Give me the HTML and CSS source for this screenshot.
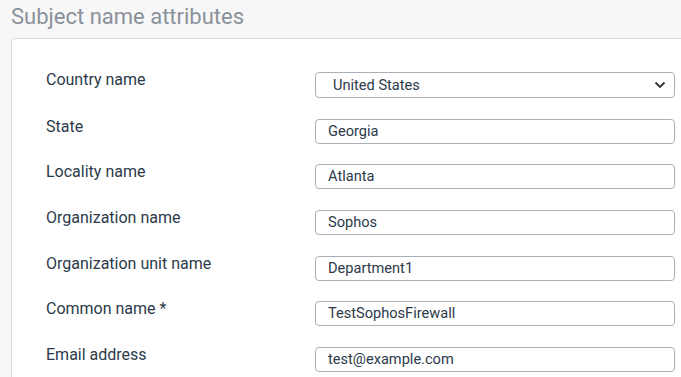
FILE: index.html
```html
<!DOCTYPE html>
<html>
<head>
<meta charset="utf-8">
<link rel="stylesheet" href="styles.css">
</head>
<body>
<div class="page">
  <h2 class="title">Subject name attributes</h2>
  <div class="card">
    <div class="form">
      <label class="label">Country name</label>
      <div class="select">
        <span>United States</span>
        <svg class="chev" width="12" height="8" viewBox="0 0 12 8"><path d="M1.5 1.5 L6 6 L10.5 1.5" fill="none" stroke="#333" stroke-width="1.8"/></svg>
      </div>
      <label class="label">State</label>
      <div class="input">Georgia</div>
      <label class="label">Locality name</label>
      <div class="input">Atlanta</div>
      <label class="label">Organization name</label>
      <div class="input">Sophos</div>
      <label class="label">Organization unit name</label>
      <div class="input">Department1</div>
      <label class="label">Common name *</label>
      <div class="input">TestSophosFirewall</div>
      <label class="label">Email address</label>
      <div class="input">test@example.com</div>
    </div>
  </div>
</div>
</body>
</html>
```
FILE: styles.css
```css
html, body {
  margin: 0;
  padding: 0;
  background: #f7f7f7;
  font-family: Roboto, "Liberation Sans", sans-serif;
  overflow: hidden;
}
.page {
  padding: 0 0 0 11px;
}
.title {
  margin: 0;
  padding-top: 3px;
  height: 35px;
  font-size: 22px;
  font-weight: 400;
  color: #8a919b;
  line-height: 28px;
}
.card {
  background: #fff;
  border: 1px solid #dcdcdc;
  border-right: none;
  border-radius: 4px 0 0 0;
  height: 400px;
  padding: 33px 0 0 34px;
}
.form {
  display: grid;
  grid-template-columns: 269px 360px;
  row-gap: 20.7px;
  align-items: start;
}
.label {
  font-size: 16px;
  color: #2c3a4a;
  line-height: 18px;
  margin-top: -1px;
}
.select, .input {
  box-sizing: border-box;
  border: 1px solid #a9afb7;
  border-radius: 4px;
  font-size: 14.6px;
  color: #2c3a4a;
  background: #fff;
}
.select {
  height: 26px;
  padding: 0 8px 0 17px;
  display: flex;
  align-items: center;
  justify-content: space-between;
}
.input {
  height: 25px;
  line-height: 23px;
  padding: 0 12px;
}
.chev { display: block; }
```
